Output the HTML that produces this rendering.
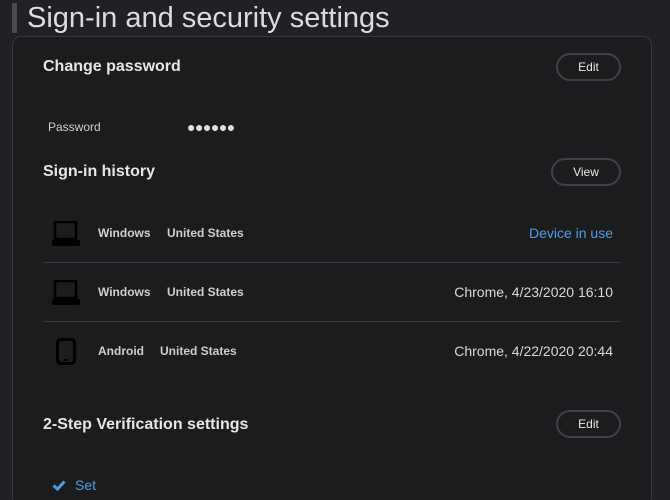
<!DOCTYPE html>
<html style="width:670px;height:500px;overflow:hidden"><head><meta charset="utf-8"><style>
*{margin:0;padding:0;box-sizing:border-box}
body{width:670px;height:500px;background:#202124;font-family:"Liberation Sans",Arial,sans-serif;position:relative;overflow:hidden;color:#e8e8e8}
.a{position:absolute;white-space:nowrap}
.bar{left:12px;top:3px;width:5px;height:30px;background:#4a4b4d}
.title{left:27px;top:1px;font-size:29px;color:#dcdcdc;line-height:34px}
.card{left:12px;top:36px;width:640px;height:470px;background:#1b1c1e;border:1px solid #36373a;border-radius:9px}
.h{font-size:16px;font-weight:bold;color:#e6e6e6}
.btn{border:2px solid #404144;border-radius:15px;height:28px;font-size:12px;color:#e8e8e8;text-align:center;line-height:24px}
.sep{left:43px;width:578px;height:1px;background:#38393c}
.os{font-size:12px;font-weight:bold;color:#cfcfcf}
.rt{font-size:14px;color:#d8d8d8;right:57px}
</style></head><body>
<div class="a bar"></div>
<div class="a title">Sign-in and security settings</div>
<div class="a card"></div>
<div class="a h" style="left:43px;top:58px">Change password</div>
<div class="a btn" style="left:556px;top:53px;width:65px">Edit</div>
<div class="a" style="left:48px;top:120px;font-size:12px;color:#cfcfcf">Password</div>
<div class="a" style="left:187px;top:119px;font-size:14px;color:#e0e0e0;letter-spacing:-0.5px">●●●●●●</div>
<div class="a h" style="left:43px;top:163px">Sign-in history</div>
<div class="a btn" style="left:551px;top:158px;width:70px">View</div>

<svg class="a" style="left:52px;top:221px" width="28" height="25"><rect x="3" y="1" width="21" height="17" fill="none" stroke="#000" stroke-width="2.5"/><rect x="0" y="19" width="28" height="6" rx="1.5" fill="#000"/></svg>
<div class="a os" style="left:98px;top:226px">Windows</div>
<div class="a os" style="left:167px;top:226px">United States</div>
<div class="a" style="right:57px;top:225px;font-size:14px;color:#4a9fe8">Device in use</div>
<div class="a sep" style="top:262px"></div>

<svg class="a" style="left:52px;top:280px" width="28" height="25"><rect x="3" y="1" width="21" height="17" fill="none" stroke="#000" stroke-width="2.5"/><rect x="0" y="19" width="28" height="6" rx="1.5" fill="#000"/></svg>
<div class="a os" style="left:98px;top:285px">Windows</div>
<div class="a os" style="left:167px;top:285px">United States</div>
<div class="a rt" style="top:284px">Chrome, 4/23/2020 16:10</div>
<div class="a sep" style="top:321px"></div>

<svg class="a" style="left:56px;top:338px" width="21" height="27"><rect x="1.5" y="1.5" width="17" height="24" rx="3" fill="none" stroke="#000" stroke-width="3"/><rect x="8" y="21" width="4" height="2" fill="#000"/></svg>
<div class="a os" style="left:98px;top:344px">Android</div>
<div class="a os" style="left:160px;top:344px">United States</div>
<div class="a rt" style="top:343px">Chrome, 4/22/2020 20:44</div>

<div class="a h" style="left:43px;top:416px">2-Step Verification settings</div>
<div class="a btn" style="left:556px;top:410px;width:65px">Edit</div>
<svg class="a" style="left:52px;top:480px" width="14" height="11"><path d="M1.5 5.5 L5.5 9 L12.5 1.5" fill="none" stroke="#4a9fe8" stroke-width="3"/></svg>
<div class="a" style="left:75px;top:477px;font-size:14px;color:#4a9fe8">Set</div>
</body></html>
